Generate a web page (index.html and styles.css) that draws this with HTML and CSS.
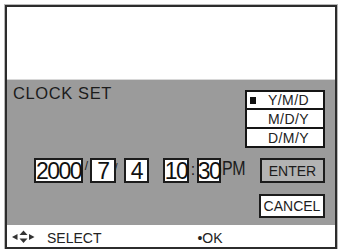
FILE: index.html
```html
<!DOCTYPE html>
<html>
<head>
<meta charset="utf-8">
<link rel="stylesheet" href="styles.css">
</head>
<body>
<div class="frame">
  <div class="screen-top"></div>
  <div class="panel">
    <div class="head">
      <div class="title">CLOCK SET</div>
      <div class="formats">
        <div class="fmt sel"><span class="mark"></span><span class="ftext">Y/M/D</span></div>
        <div class="fmt"><span class="mark off"></span><span class="ftext">M/D/Y</span></div>
        <div class="fmt"><span class="mark off"></span><span class="ftext">D/M/Y</span></div>
      </div>
    </div>
    <div class="fields">
      <div class="field f-year"><span>2000</span></div>
      <span class="sep slash">/</span>
      <div class="field f-month"><span>7</span></div>
      <span class="sep slash2">/</span>
      <div class="field f-day"><span>4</span></div>
      <span class="gap"></span>
      <div class="field f-hour"><span>10</span></div>
      <span class="sep colon">:</span>
      <div class="field f-min"><span>30</span></div>
      <span class="ampm">PM</span>
      <div class="btn enter">ENTER</div>
    </div>
    <div class="btn cancel">CANCEL</div>
  </div>
  <div class="bar">
    <svg class="arrows" width="24" height="14" viewBox="0 0 24 14">
      <polygon points="0,7 5.5,4 5.5,10" fill="#333"/>
      <polygon points="11.5,0.5 7.5,5 15.5,5" fill="#333"/>
      <polygon points="7.5,8.5 15.5,8.5 11.5,13" fill="#333"/>
      <polygon points="17,4 17,10 22.5,7" fill="#333"/>
    </svg>
    <span class="select">SELECT</span>
    <span class="ok">&bull;OK</span>
  </div>
</div>
</body>
</html>
```

FILE: styles.css
```css
html, body {
  margin: 0;
  padding: 0;
  background: #ffffff;
}

body {
  font-family: "Liberation Sans", Arial, sans-serif;
  color: #1e1e1e;
}

.frame {
  margin: 5px 0 0 5px;
  width: 332px;
  height: 244px;
  box-sizing: border-box;
  border: 2px solid #2c2c2c;
  box-shadow: 0 0 0 1px #b8b8b8;
  display: flex;
  flex-direction: column;
}

.screen-top {
  height: 73px;
  background: #ffffff;
  border-bottom: 1px solid #d8d8d8;
  box-sizing: border-box;
}

.panel {
  height: 145px;
  background: #9b9b9b;
  box-sizing: border-box;
  padding: 4px 10px 0 6px;
  display: flex;
  flex-direction: column;
}

.head {
  display: flex;
  justify-content: space-between;
  align-items: flex-start;
}

.title {
  font-size: 16.5px;
  line-height: 18px;
  letter-spacing: 0.6px;
  color: #1c1c1c;
}

.formats {
  margin-top: 6px;
  width: 80px;
  box-sizing: border-box;
  border: 2px solid #151515;
  background: #ffffff;
}

.fmt {
  display: grid;
  grid-template-columns: 7px 1fr;
  align-items: center;
  padding: 0 3px;
  height: 17px;
  font-size: 14px;
  letter-spacing: 0.4px;
  color: #222;
}

.fmt + .fmt {
  border-top: 2px solid #151515;
}

.fmt.sel {
  height: 16px;
}

.mark {
  width: 6px;
  height: 7px;
  background: #111;
}

.mark.off {
  background: transparent;
}

.ftext {
  text-align: center;
  line-height: 16px;
}

.fields {
  margin-top: 10px;
  margin-left: 21px;
  display: flex;
  align-items: flex-start;
  height: 25px;
}

.field {
  height: 25px;
  box-sizing: border-box;
  border: 2px solid #1c1c1c;
  background: #ffffff;
  display: flex;
  justify-content: center;
  align-items: center;
  overflow: visible;
  font-size: 23px;
  letter-spacing: -1.5px;
  line-height: 21px;
  color: #111;
  white-space: nowrap;
}

.field span {
  padding-top: 1px;
}

.f-year { width: 49px; }
.f-month { width: 26px; }
.f-day { width: 25px; }
.f-hour { width: 26px; }
.f-min { width: 24px; }

.sep {
  font-size: 12px;
  line-height: 12px;
  color: #222;
  text-align: center;
}

.slash {
  width: 7px;
  margin-top: 2px;
}

.slash2 {
  width: 8px;
  margin-left: -4px;
  margin-right: 4px;
  margin-top: 4px;
}

.gap {
  width: 14px;
}

.colon {
  width: 8px;
  font-size: 16px;
  line-height: 16px;
  margin-top: 4px;
}

.ampm {
  margin-left: 1px;
  font-size: 21px;
  line-height: 20px;
  letter-spacing: -0.5px;
  display: inline-block;
  transform: scaleX(0.76);
  transform-origin: left center;
  color: #1c1c1c;
}

.btn {
  box-sizing: border-box;
  border: 2px solid #1c1c1c;
  display: flex;
  justify-content: center;
  align-items: center;
  font-size: 14px;
  color: #1c1c1c;
}

.enter {
  margin-left: auto;
  width: 65px;
  height: 25px;
  background: #b3b3b3;
}

.cancel {
  align-self: flex-end;
  margin-top: 11px;
  width: 66px;
  height: 24px;
  background: #ffffff;
}

.bar {
  height: 22px;
  background: #ffffff;
  box-sizing: border-box;
  padding: 5px 0 0 5px;
  display: flex;
  align-items: flex-start;
  font-size: 14px;
  line-height: 16px;
  color: #222;
}

.arrows {
  margin-top: 0px;
  display: block;
}

.select {
  margin-left: 11px;
}

.ok {
  margin-left: 96px;
}
```
